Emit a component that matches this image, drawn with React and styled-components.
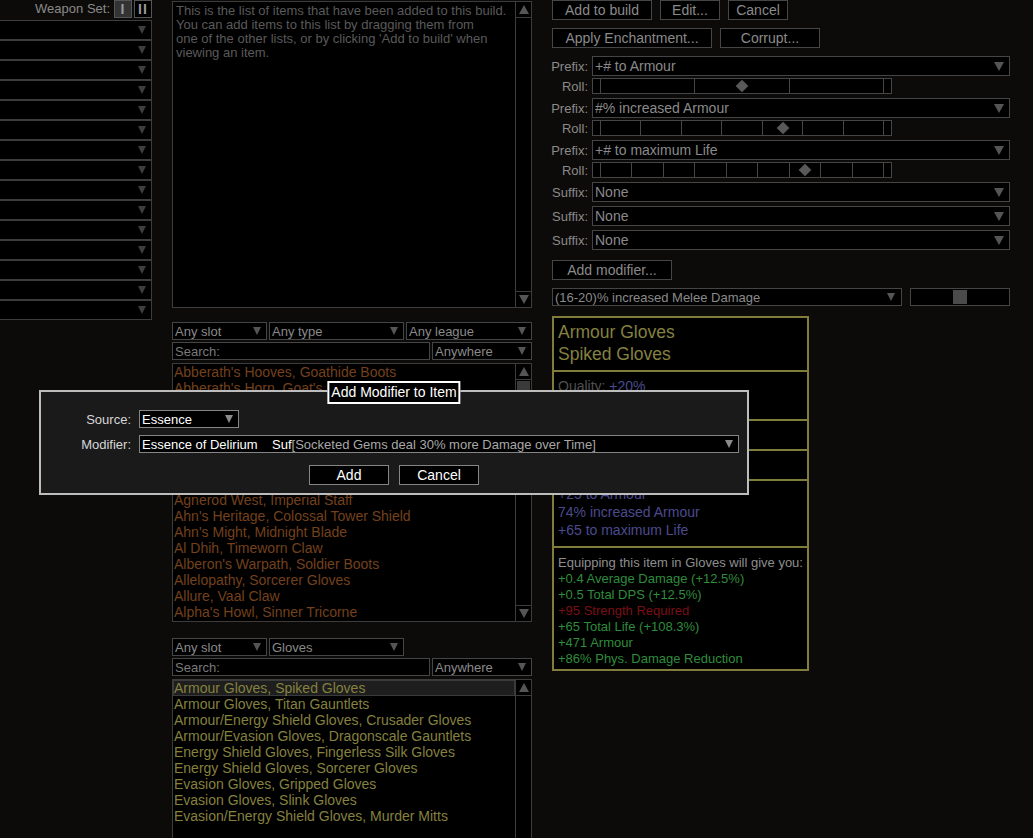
import React from 'react';
import styled, { createGlobalStyle, css } from 'styled-components';

const GlobalStyle = createGlobalStyle`
  html, body {
    margin: 0;
    padding: 0;
    background: #0d0b09;
  }
  body {
    font-family: "Liberation Sans", Arial, sans-serif;
  }
  *, *::before, *::after {
    box-sizing: border-box;
  }
`;

const Page = styled.div`
  position: relative;
  display: flex;
  align-items: flex-start;
  width: 1033px;
  height: 838px;
  overflow: hidden;
  background: #0d0b09;
  color: #8a8a8a;
  font-size: 14px;
`;

const Caret = styled.span`
  flex: none;
  width: 0;
  height: 0;
  border-left: ${p => (p.$w || 10) / 2}px solid transparent;
  border-right: ${p => (p.$w || 10) / 2}px solid transparent;
  border-${p => (p.$up ? 'bottom' : 'top')}: ${p => p.$h || 8}px solid ${p => p.$color || '#555'};
`;

/* ---------- left: item slots ---------- */

const SlotColumn = styled.div`
  display: flex;
  flex-direction: column;
  flex: none;
  width: 152px;
  margin-right: 20px;
`;

const WeaponSetBar = styled.div`
  display: flex;
  justify-content: flex-end;
  align-items: flex-start;
  gap: 2px;
  height: 20px;
`;

const WeaponSetLabel = styled.span`
  margin-right: 2px;
  font-size: 13px;
  line-height: 18px;
`;

const SetButton = styled.div`
  display: flex;
  align-items: center;
  justify-content: center;
  width: 18px;
  height: 18px;
  border: 1px solid #555;
  background: ${p => (p.$active ? '#333' : '#000')};
  color: #9a9a9a;
  font-size: 14px;
  font-weight: 700;
  letter-spacing: 1px;
`;

const SlotSelect = styled.div`
  display: flex;
  align-items: center;
  justify-content: flex-end;
  height: 20px;
  padding-right: 5px;
  border: 1px solid #3c3c3c;
  border-left: none;
  background: #000;
`;

/* ---------- middle: item lists ---------- */

const ItemsColumn = styled.div`
  display: flex;
  flex-direction: column;
  flex: none;
  width: 360px;
  margin-right: 16px;
`;

const Panel = styled.div`
  display: flex;
  flex: none;
  height: ${p => p.$h}px;
  margin-top: ${p => p.$mt || 0}px;
  border: 1px solid #3c3c3c;
  background: #000;
`;

const HelpText = styled.div`
  flex: 1;
  padding: 2px 3px;
  font-size: 13px;
  line-height: 14px;
  color: #5a5a5a;
`;

const Scrollbar = styled.div`
  display: flex;
  flex-direction: column;
  flex: none;
  width: 16px;
  border-left: 1px solid #3c3c3c;
`;

const ScrollArrow = styled.div`
  display: flex;
  align-items: center;
  justify-content: center;
  flex: none;
  height: 16px;
  margin-top: ${p => (p.$down ? 'auto' : '0')};
  border-${p => (p.$down ? 'top' : 'bottom')}: 1px solid #3c3c3c;
`;

const ScrollThumb = styled.div`
  height: 40px;
  margin: 1px 1px 0 1px;
  background: #3a3a3a;
`;

const FilterRow = styled.div`
  display: flex;
  gap: 2px;
  margin-top: ${p => p.$mt || 0}px;
`;

const Select = styled.div`
  display: flex;
  align-items: center;
  flex: none;
  width: ${p => p.$w}px;
  height: ${p => p.$h || 20}px;
  padding: 0 ${p => (p.$pr == null ? 5 : p.$pr)}px 0 2px;
  border: 1px solid ${p => (p.$dialog ? '#858585' : '#454545')};
  background: #000;
  color: ${p => (p.$dialog ? '#fff' : '#8a8a8a')};
  font-size: ${p => p.$fs || 14}px;
  white-space: pre;
  overflow: hidden;
`;

const SelectText = styled.span`
  flex: 1;
  overflow: hidden;
`;

const SearchBox = styled.div`
  display: flex;
  align-items: center;
  flex: none;
  width: ${p => p.$w}px;
  height: 18px;
  padding-left: 2px;
  border: 1px solid #454545;
  background: #000;
  font-size: 13px;
  color: #7a7a7a;
`;

const ListBody = styled.div`
  flex: 1;
  overflow: hidden;
`;

const ListRow = styled.div`
  height: 16px;
  padding-left: 1px;
  font-size: 14px;
  line-height: 16px;
  white-space: nowrap;
  color: ${p => p.$color};
  ${p =>
    p.$selected &&
    css`
      background: #1e1e1e;
      box-shadow: inset 0 0 0 1px #3a3a3a;
    `}
`;

/* ---------- right: item editor ---------- */

const EditorColumn = styled.div`
  display: flex;
  flex-direction: column;
  flex: none;
  width: 462px;
`;

const ButtonRow = styled.div`
  display: flex;
  gap: 8px;
  padding-left: 4px;
  margin-top: ${p => p.$mt || 0}px;
`;

const Button = styled.div`
  display: flex;
  align-items: center;
  justify-content: center;
  flex: none;
  width: ${p => p.$w}px;
  height: 20px;
  border: 1px solid ${p => (p.$dialog ? '#858585' : '#454545')};
  background: #000;
  color: ${p => (p.$dialog ? '#fff' : '#8a8a8a')};
  font-size: 14px;
`;

const ModStack = styled.div`
  display: flex;
  flex-direction: column;
  gap: 4px;
  margin-top: 8px;
`;

const AffixGroup = styled.div`
  display: flex;
  flex-direction: column;
  gap: 2px;
`;

const FieldRow = styled.div`
  display: flex;
  align-items: center;
  height: ${p => p.$h || 20}px;
`;

const FieldLabel = styled.span`
  flex: none;
  width: 44px;
  padding-right: 4px;
  text-align: right;
  font-size: 13px;
  white-space: nowrap;
`;

const RollBox = styled.div`
  display: flex;
  flex: none;
  width: 300px;
  height: 16px;
  border: 1px solid #454545;
  background: #000;
`;

const RollCap = styled.div`
  flex: none;
  width: 8px;
  border-${p => (p.$right ? 'left' : 'right')}: 1px solid #454545;
`;

const RollTrack = styled.div`
  position: relative;
  display: flex;
  flex: 1;
`;

const RollStep = styled.div`
  flex: 1;
  & + & {
    border-left: 1px solid #454545;
  }
`;

const RollKnob = styled.div`
  position: absolute;
  top: 50%;
  width: 9px;
  height: 9px;
  background: #595959;
  transform: translate(-50%, -50%) rotate(45deg);
`;

const ImplicitRow = styled.div`
  display: flex;
  gap: 8px;
  margin-top: 8px;
  padding-left: 4px;
`;

const SliderBox = styled.div`
  position: relative;
  flex: none;
  width: 100px;
  height: 18px;
  border: 1px solid #454545;
  background: #000;
`;

const SliderHandle = styled.div`
  position: absolute;
  top: 1px;
  width: 14px;
  height: 14px;
  background: #4a4a4a;
  transform: translateX(-50%);
`;

const Tooltip = styled.div`
  display: flex;
  flex-direction: column;
  flex: none;
  width: 257px;
  margin: 10px 0 0 4px;
  border: 2px solid #807c3c;
  background: #000;
`;

const TipSection = styled.div`
  padding: ${p => p.$pad || '5px 4px'};
  & + & {
    border-top: 2px solid #807c3c;
  }
`;

const TipTitle = styled.div`
  font-size: 17.5px;
  line-height: 22px;
  color: #858140;
`;

const TipLine = styled.div`
  font-size: 14px;
  line-height: 18px;
  white-space: nowrap;
  color: ${p => p.$color || '#4b4b8e'};
`;

const TipMuted = styled.span`
  color: #505050;
`;

const EquipLine = styled.div`
  font-size: 13px;
  line-height: 16px;
  white-space: nowrap;
  color: ${p => p.$color || '#2f8c3c'};
`;

/* ---------- popup ---------- */

const Dialog = styled.div`
  position: absolute;
  left: 39px;
  top: 390px;
  display: flex;
  flex-direction: column;
  width: 710px;
  height: 105px;
  padding-top: 18px;
  border: 2px solid #bdbdbd;
  background: #1a1a1a;
`;

const DialogTitle = styled.div`
  position: absolute;
  top: -11px;
  left: 50%;
  height: 23px;
  padding: 0 2px;
  border: 2px solid #fff;
  background: #000;
  color: #fff;
  font-size: 14px;
  line-height: 19px;
  white-space: nowrap;
  transform: translateX(-50%);
`;

const DialogRow = styled.div`
  display: flex;
  align-items: center;
  height: 18px;
  margin-top: ${p => p.$mt || 0}px;
`;

const DialogLabel = styled.span`
  flex: none;
  width: 98px;
  padding-right: 8px;
  text-align: right;
  font-size: 13px;
  color: #d6d6d6;
`;

const DialogButtons = styled.div`
  display: flex;
  justify-content: center;
  gap: 10px;
  margin-top: 12px;
`;

const ModHint = styled.span`
  color: #a8a8a8;
`;

const uniques = [
  "Abberath's Hooves, Goathide Boots",
  "Abberath's Horn, Goat's Horn",
  'Abyssus, Ezomyte Burgonet',
  "Acton's Nightmare, Exquisite Blade",
  'Aegis Aurora, Champion Kite Shield',
  'Agnerod East, Imperial Staff',
  'Agnerod North, Imperial Staff',
  'Agnerod South, Imperial Staff',
  'Agnerod West, Imperial Staff',
  "Ahn's Heritage, Colossal Tower Shield",
  "Ahn's Might, Midnight Blade",
  'Al Dhih, Timeworn Claw',
  "Alberon's Warpath, Soldier Boots",
  'Allelopathy, Sorcerer Gloves',
  'Allure, Vaal Claw',
  "Alpha's Howl, Sinner Tricorne",
];

const bases = [
  'Armour Gloves, Spiked Gloves',
  'Armour Gloves, Titan Gauntlets',
  'Armour/Energy Shield Gloves, Crusader Gloves',
  'Armour/Evasion Gloves, Dragonscale Gauntlets',
  'Energy Shield Gloves, Fingerless Silk Gloves',
  'Energy Shield Gloves, Sorcerer Gloves',
  'Evasion Gloves, Gripped Gloves',
  'Evasion Gloves, Slink Gloves',
  'Evasion/Energy Shield Gloves, Murder Mitts',
];

const prefixes = [
  { text: '+# to Armour', steps: 3, roll: 0.5 },
  { text: '#% increased Armour', steps: 7, roll: 0.645 },
  { text: '+# to maximum Life', steps: 9, roll: 0.725 },
];

const equipStats = [
  { text: '+0.4 Average Damage (+12.5%)' },
  { text: '+0.5 Total DPS (+12.5%)' },
  { text: '+95 Strength Required', color: '#7a0f16' },
  { text: '+65 Total Life (+108.3%)' },
  { text: '+471 Armour' },
  { text: '+86% Phys. Damage Reduction' },
];

const Roll = ({ steps, value }) => (
  <RollBox>
    <RollCap />
    <RollTrack>
      {Array.from({ length: steps }, (_, i) => (
        <RollStep key={i} />
      ))}
      <RollKnob style={{ left: `${value * 100}%` }} />
    </RollTrack>
    <RollCap $right />
  </RollBox>
);

const ScrollBar = ({ thumb, down = true }) => (
  <Scrollbar>
    <ScrollArrow>
      <Caret $up $w={10} $h={9} />
    </ScrollArrow>
    {thumb && <ScrollThumb />}
    {down && (
      <ScrollArrow $down>
        <Caret $w={10} $h={9} />
      </ScrollArrow>
    )}
  </Scrollbar>
);

const App = () => {
  return (
    <Page>
      <GlobalStyle />

      <SlotColumn>
        <WeaponSetBar>
          <WeaponSetLabel>Weapon Set:</WeaponSetLabel>
          <SetButton $active>I</SetButton>
          <SetButton>II</SetButton>
        </WeaponSetBar>
        {Array.from({ length: 15 }, (_, i) => (
          <SlotSelect key={i}>
            <Caret $w={9} $h={8} $color="#3e3e3e" />
          </SlotSelect>
        ))}
      </SlotColumn>

      <ItemsColumn>
        <Panel $h={307} $mt={1}>
          <HelpText>
            This is the list of items that have been added to this build.
            <br />
            You can add items to this list by dragging them from
            <br />
            one of the other lists, or by clicking 'Add to build' when
            <br />
            viewing an item.
          </HelpText>
          <ScrollBar />
        </Panel>

        <FilterRow $mt={14}>
          <Select $w={95} $h={18} $fs={13}>
            <SelectText>Any slot</SelectText>
            <Caret $w={8} $h={8} />
          </Select>
          <Select $w={135} $h={18} $fs={13}>
            <SelectText>Any type</SelectText>
            <Caret $w={8} $h={8} />
          </Select>
          <Select $w={126} $h={18} $fs={13}>
            <SelectText>Any league</SelectText>
            <Caret $w={8} $h={8} />
          </Select>
        </FilterRow>
        <FilterRow $mt={2}>
          <SearchBox $w={258}>Search:</SearchBox>
          <Select $w={100} $h={18} $fs={13}>
            <SelectText>Anywhere</SelectText>
            <Caret $w={8} $h={8} />
          </Select>
        </FilterRow>
        <Panel $h={259} $mt={3}>
          <ListBody>
            {uniques.map(name => (
              <ListRow key={name} $color="#74401c">
                {name}
              </ListRow>
            ))}
          </ListBody>
          <ScrollBar thumb />
        </Panel>

        <FilterRow $mt={16}>
          <Select $w={95} $h={18} $fs={13}>
            <SelectText>Any slot</SelectText>
            <Caret $w={8} $h={8} />
          </Select>
          <Select $w={135} $h={18} $fs={13}>
            <SelectText>Gloves</SelectText>
            <Caret $w={8} $h={8} />
          </Select>
        </FilterRow>
        <FilterRow $mt={2}>
          <SearchBox $w={258}>Search:</SearchBox>
          <Select $w={100} $h={18} $fs={13}>
            <SelectText>Anywhere</SelectText>
            <Caret $w={8} $h={8} />
          </Select>
        </FilterRow>
        <Panel $h={175} $mt={3}>
          <ListBody>
            {bases.map((name, i) => (
              <ListRow key={name} $color="#85813f" $selected={i === 0}>
                {name}
              </ListRow>
            ))}
          </ListBody>
          <ScrollBar down={false} />
        </Panel>
      </ItemsColumn>

      <EditorColumn>
        <ButtonRow>
          <Button $w={100}>Add to build</Button>
          <Button $w={60}>Edit...</Button>
          <Button $w={60}>Cancel</Button>
        </ButtonRow>
        <ButtonRow $mt={8}>
          <Button $w={160}>Apply Enchantment...</Button>
          <Button $w={100}>Corrupt...</Button>
        </ButtonRow>

        <ModStack>
          {prefixes.map(mod => (
            <AffixGroup key={mod.text}>
              <FieldRow>
                <FieldLabel>Prefix:</FieldLabel>
                <Select $w={418}>
                  <SelectText>{mod.text}</SelectText>
                  <Caret $w={10} $h={9} />
                </Select>
              </FieldRow>
              <FieldRow $h={16}>
                <FieldLabel>Roll:</FieldLabel>
                <Roll steps={mod.steps} value={mod.roll} />
              </FieldRow>
            </AffixGroup>
          ))}
          {[0, 1, 2].map(i => (
            <FieldRow key={i}>
              <FieldLabel>Suffix:</FieldLabel>
              <Select $w={418}>
                <SelectText>None</SelectText>
                <Caret $w={10} $h={9} />
              </Select>
            </FieldRow>
          ))}
        </ModStack>

        <ButtonRow $mt={10}>
          <Button $w={120}>Add modifier...</Button>
        </ButtonRow>

        <ImplicitRow>
          <Select $w={350} $h={18} $fs={13} $pr={6}>
            <SelectText>(16-20)% increased Melee Damage</SelectText>
            <Caret $w={9} $h={8} />
          </Select>
          <SliderBox>
            <SliderHandle style={{ left: '49.5%' }} />
          </SliderBox>
        </ImplicitRow>

        <Tooltip>
          <TipSection $pad="3px 4px 5px">
            <TipTitle>Armour Gloves</TipTitle>
            <TipTitle>Spiked Gloves</TipTitle>
          </TipSection>
          <TipSection $pad="5px 4px 6px">
            <TipLine>
              <TipMuted>Quality: </TipMuted>+20%
            </TipLine>
            <TipLine>
              <TipMuted>Armour: </TipMuted>471
            </TipLine>
          </TipSection>
          <TipSection>
            <TipLine $color="#6a6a6a">Requires Level 70, 95 Str</TipLine>
          </TipSection>
          <TipSection>
            <TipLine $color="#4b4b8e">18% increased Melee Damage</TipLine>
          </TipSection>
          <TipSection $pad="4px 4px 7px">
            <TipLine>+25 to Armour</TipLine>
            <TipLine>74% increased Armour</TipLine>
            <TipLine>+65 to maximum Life</TipLine>
          </TipSection>
          <TipSection $pad="7px 4px 2px">
            <EquipLine $color="#8e8e8e">Equipping this item in Gloves will give you:</EquipLine>
            {equipStats.map(s => (
              <EquipLine key={s.text} $color={s.color}>
                {s.text}
              </EquipLine>
            ))}
          </TipSection>
        </Tooltip>
      </EditorColumn>

      <Dialog>
        <DialogTitle>Add Modifier to Item</DialogTitle>
        <DialogRow>
          <DialogLabel>Source:</DialogLabel>
          <Select $dialog $w={100} $h={18} $fs={13}>
            <SelectText>Essence</SelectText>
            <Caret $w={8} $h={8} $color="#8a8a8a" />
          </Select>
        </DialogRow>
        <DialogRow $mt={7}>
          <DialogLabel>Modifier:</DialogLabel>
          <Select $dialog $w={600} $h={18} $fs={13}>
            <SelectText>
              {'Essence of Delirium    Suf'}
              <ModHint>[Socketed Gems deal 30% more Damage over Time]</ModHint>
            </SelectText>
            <Caret $w={8} $h={8} $color="#8a8a8a" />
          </Select>
        </DialogRow>
        <DialogButtons>
          <Button $dialog $w={80}>Add</Button>
          <Button $dialog $w={80}>Cancel</Button>
        </DialogButtons>
      </Dialog>
    </Page>
  );
};

export default App;
